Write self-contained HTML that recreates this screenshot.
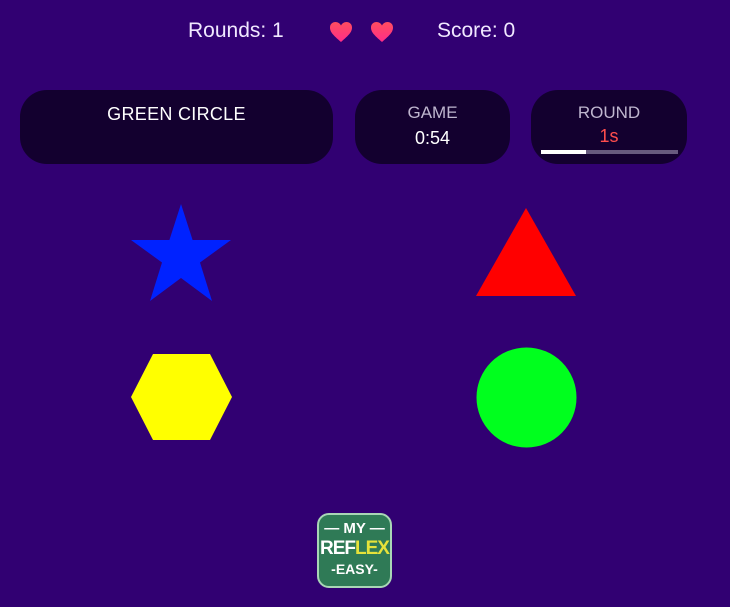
<!DOCTYPE html>
<html><head><style>
body{margin:0;width:730px;height:607px;background:#310072;font-family:"Segoe UI","Liberation Sans",sans-serif;position:relative;overflow:hidden;color:#fff}
.t{position:absolute;font-size:21px;color:#f0e8ff;top:19px}
.p{position:absolute;top:90px;height:74px;background:#13002f;border-radius:27px;text-align:center}
.lbl{font-size:17px;color:#bfb6cf;margin-top:13px;line-height:20px}
.val{font-size:18px;line-height:22px;margin-top:4px}
</style></head><body>
<div class="t" style="left:188px">Rounds: 1</div>
<div class="t" style="left:437px">Score: 0</div>
<svg style="position:absolute;left:329px;top:21px" width="24" height="22" viewBox="0 0 24 22"><defs><linearGradient id="g" x1="0" y1="0" x2="0" y2="1"><stop offset="0" stop-color="#ff4d5e"/><stop offset="1" stop-color="#ff2d8a"/></linearGradient></defs><path d="M12 21 C4 14 1 11 1 6.5 1 3 3.5 1 6.5 1 9 1 11 2.5 12 4.5 13 2.5 15 1 17.5 1 20.5 1 23 3 23 6.5 23 11 20 14 12 21Z" fill="url(#g)"/></svg>
<svg style="position:absolute;left:370px;top:21px" width="24" height="22" viewBox="0 0 24 22"><path d="M12 21 C4 14 1 11 1 6.5 1 3 3.5 1 6.5 1 9 1 11 2.5 12 4.5 13 2.5 15 1 17.5 1 20.5 1 23 3 23 6.5 23 11 20 14 12 21Z" fill="url(#g)"/></svg>
<div class="p" style="left:20px;width:313px"><div style="font-size:18px;margin-top:14px;letter-spacing:.3px">GREEN CIRCLE</div></div>
<div class="p" style="left:355px;width:155px"><div class="lbl">GAME</div><div class="val">0:54</div></div>
<div class="p" style="left:531px;width:156px"><div class="lbl">ROUND</div><div class="val" style="color:#ff4d4d;margin-top:2px">1s</div>
<div style="position:absolute;left:10px;top:60px;width:137px;height:4px;background:#675a7e"><div style="width:45px;height:4px;background:#fff"></div></div></div>
<svg style="position:absolute;left:0;top:0" width="730" height="607">
<polygon points="181,204 192.6,240 231,240 200,262.5 212,301 181,278 150,301 162,262.5 131,240 169.4,240" fill="#0022ff"/>
<polygon points="526,208 576,296 476,296" fill="#ff0000"/>
<polygon points="153,354 210,354 232,397 210,440 153,440 131,397" fill="#ffff00"/>
<circle cx="526.5" cy="397.5" r="50" fill="#00ff1e"/>
</svg>
<div style="position:absolute;left:317px;top:513px;width:71px;height:71px;border:2px solid #a9d6b6;border-radius:12px;background:#2f7a56;text-align:center;font-family:'Liberation Sans',sans-serif;font-weight:bold;line-height:20px">
<div style="font-size:15px;margin-top:4px">— MY —</div>
<div style="font-size:19px;letter-spacing:-1px">REF<span style="color:#e6e23a">LEX</span></div>
<div style="font-size:14px">-EASY-</div></div>
</body></html>
